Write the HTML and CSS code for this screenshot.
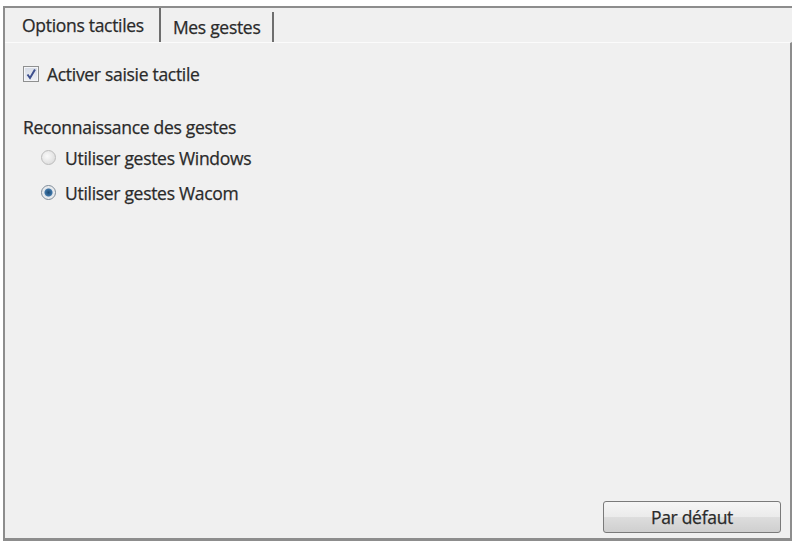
FILE: index.html
```html
<!DOCTYPE html>
<html lang="fr">
<head>
    <meta charset="UTF-8">
    <title>Options tactiles</title>
    <link rel="stylesheet" href="styles.css">
</head>
<body>
    <div class="frame">
        <div class="tabs">
            <div class="tab selected">Options tactiles</div>
            <div class="tab">Mes gestes</div>
        </div>
        <div class="panel">
            <label class="row check-row">
                <span class="checkbox">
                    <svg width="12" height="12" viewBox="0 0 12 12"><path d="M2.5 6.5 L5 10 L10 1.5" fill="none" stroke="#3d4f8e" stroke-width="2"/></svg>
                </span>
                Activer saisie tactile
            </label>

            <p class="group-title">Reconnaissance des gestes</p>
            <label class="row radio-row">
                <span class="radio"></span>
                Utiliser gestes Windows
            </label>
            <label class="row radio-row">
                <span class="radio on"></span>
                Utiliser gestes Wacom
            </label>

            <div class="actions">
                <button class="button">Par défaut</button>
            </div>
        </div>
    </div>
</body>
</html>
```

FILE: styles.css
```css
body {
    margin: 0;
    background: #ffffff;
    font-family: "Open Sans", sans-serif;
    font-size: 17.5px;
    letter-spacing: -0.3px;
    color: #2a2a2a;
    -webkit-text-stroke: 0.25px #2a2a2a;
}
.frame {
    margin: 6px 0 0 3px;
    width: 789px;
    height: 535px;
    box-sizing: border-box;
    border-top: 2px solid #8d8d8d;
    border-left: 2px solid #8d8d8d;
    border-bottom: 3px solid #8d8d8d;
    background: #f0f0f0;
    display: flex;
    flex-direction: column;
}
.tabs {
    display: flex;
    height: 34px;
    flex-shrink: 0;
}
.tab {
    margin-top: 4px;
    padding: 0 12px;
    border-right: 2px solid #6e6e6e;
    line-height: 30px;
}
.tab.selected {
    margin-top: 0;
    padding: 0 15px 0 17px;
    line-height: 34px;
}
.panel {
    flex: 1;
    border-top: 1px solid #fbfbfb;
    border-right: 2px solid #8d8d8d;
    padding: 16px 0 0 18px;
    display: flex;
    flex-direction: column;
}
.row {
    display: flex;
    align-items: center;
    height: 30px;
}
.check-row {
    margin-left: 0;
}
.checkbox {
    width: 14px;
    height: 14px;
    margin-right: 8px;
    border: 1px solid #8f9090;
    background: linear-gradient(#d6dbe6, #eef0f5);
    box-shadow: inset 0 0 0 1px #f4f5f8;
    display: flex;
    align-items: center;
    justify-content: center;
}
.group-title {
    margin: 26px 0 1px 0;
}
.radio-row {
    margin-left: 18px;
    height: 35px;
}
.radio {
    width: 13px;
    height: 13px;
    margin-right: 9px;
    border-radius: 50%;
    border: 1px solid #bcbcbc;
    background: radial-gradient(circle at 40% 40%, #fafafa, #d5d5d5);
}
.radio.on {
    border-color: #7c8a98;
    background: radial-gradient(circle, #1c4a74 0, #3c74a6 3.5px, #dfe4ea 4.5px, #f4f4f4 7px);
}
.actions {
    margin-top: auto;
    display: flex;
    justify-content: flex-end;
    padding: 0 9px 5px 0;
}
.button {
    width: 178px;
    height: 32px;
    font-family: inherit;
    font-size: 17.5px;
    letter-spacing: -0.3px;
    color: #2a2a2a;
    border: 1px solid #7a7a7a;
    border-radius: 3px;
    background: linear-gradient(#f5f5f5 0, #ebebeb 50%, #dddddd 51%, #cfcfcf 100%);
}
```
